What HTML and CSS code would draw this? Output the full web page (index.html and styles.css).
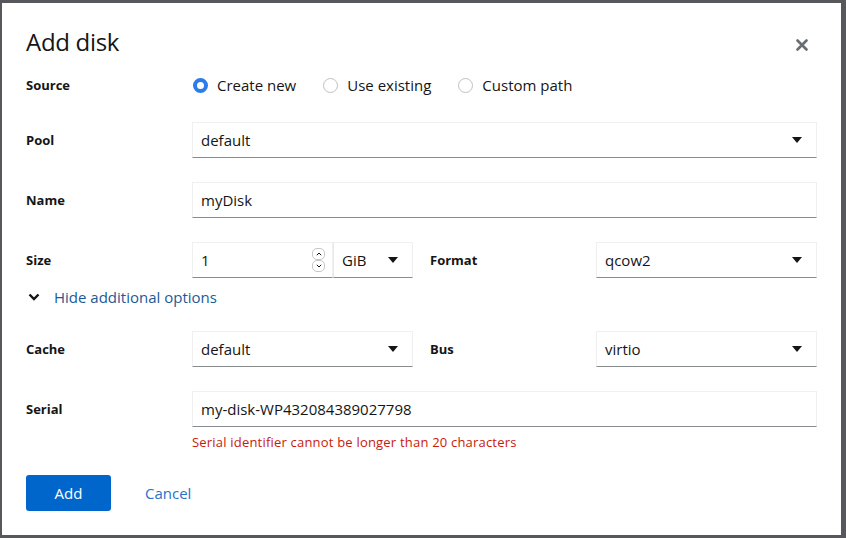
FILE: index.html
```html
<!DOCTYPE html>
<html lang="en">
<head>
<meta charset="utf-8">
<title>Add disk</title>
<link rel="stylesheet" href="styles.css">
</head>
<body>
<div class="backdrop">
  <div class="modal">
    <header class="modal-head">
      <h1 class="title">Add disk</h1>
      <button class="close" aria-label="Close">
        <svg width="12" height="12" viewBox="0 0 12 12"><path d="M1.5 1.5 L10.5 10.5 M10.5 1.5 L1.5 10.5" stroke="#6a6e73" stroke-width="2.6" stroke-linecap="round"/></svg>
      </button>
    </header>

    <div class="form">
      <div class="row row-source">
        <div class="label">Source</div>
        <div class="radios">
          <label class="radio"><span class="dot on"></span>Create new</label>
          <label class="radio"><span class="dot"></span>Use existing</label>
          <label class="radio"><span class="dot"></span>Custom path</label>
        </div>
      </div>

      <div class="row">
        <div class="label">Pool</div>
        <div class="control span3 select"><span>default</span><span class="caret"></span></div>
      </div>

      <div class="row">
        <div class="label">Name</div>
        <div class="control span3"><span>myDisk</span></div>
      </div>

      <div class="row">
        <div class="label">Size</div>
        <div class="size-group">
          <div class="control num"><span>1</span>
            <span class="spin">
              <span class="spin-btn"><svg width="6" height="4" viewBox="0 0 6 4"><path d="M0.8 3.2 L3 1 L5.2 3.2" fill="none" stroke="#151515" stroke-width="1"/></svg></span>
              <span class="spin-btn"><svg width="6" height="4" viewBox="0 0 6 4"><path d="M0.8 0.8 L3 3 L5.2 0.8" fill="none" stroke="#151515" stroke-width="1"/></svg></span>
            </span>
          </div>
          <div class="control unit select"><span>GiB</span><span class="caret"></span></div>
        </div>
        <div class="label label2">Format</div>
        <div class="control select"><span>qcow2</span><span class="caret"></span></div>
      </div>

      <div class="toggle-row">
        <svg class="chev" width="12" height="8" viewBox="0 0 12 8"><path d="M1.5 1.5 L6 6 L10.5 1.5" fill="none" stroke="#151515" stroke-width="2.4"/></svg>
        <span class="toggle-text">Hide additional options</span>
      </div>

      <div class="row row-cache">
        <div class="label">Cache</div>
        <div class="control select"><span>default</span><span class="caret"></span></div>
        <div class="label label2">Bus</div>
        <div class="control select"><span>virtio</span><span class="caret"></span></div>
      </div>

      <div class="row">
        <div class="label">Serial</div>
        <div class="control span3"><span>my-disk-WP432084389027798</span></div>
      </div>
      <div class="row row-error">
        <div></div>
        <div class="error span3">Serial identifier cannot be longer than 20 characters</div>
      </div>
    </div>

    <footer class="actions">
      <button class="btn-primary">Add</button>
      <button class="btn-link">Cancel</button>
    </footer>
  </div>
</div>
</body>
</html>
```

FILE: styles.css
```css
* { box-sizing: border-box; }
html, body { margin: 0; padding: 0; }
body {
  width: 846px;
  height: 538px;
  overflow: hidden;
  background: #56585b;
  font-family: "Open Sans", "Liberation Sans", sans-serif;
  color: #151515;
}
.backdrop {
  padding: 3px 5px 3px 2px;
}
.modal {
  width: 839px;
  height: 532px;
  background: #fff;
  padding: 24px 24px 24px 24px;
  display: flex;
  flex-direction: column;
}
.modal-head {
  display: flex;
  justify-content: space-between;
  align-items: center;
  height: 30px;
}
.title {
  margin: 0;
  font-size: 24px;
  font-weight: 400;
  line-height: 30px;
  letter-spacing: -0.3px;
}
.close {
  background: none;
  border: 0;
  padding: 0;
  margin-right: 9px;
  margin-top: 6px;
  width: 12px;
  height: 12px;
  display: flex;
}
.form {
  display: flex;
  flex-direction: column;
  margin-top: 18px;
}
.row {
  display: grid;
  grid-template-columns: 166px 221px 183px 221px;
  align-items: center;
  margin-bottom: 24px;
}
.row-source { height: 20px; margin-bottom: 27px; }
.label {
  font-size: 13px;
  font-weight: 700;
  line-height: 20px;
}
.label2 { padding-left: 17px; }
.span3 { grid-column: 2 / 5; }
.radios {
  grid-column: 2 / 5;
  display: flex;
  align-items: center;
}
.radio {
  display: flex;
  align-items: center;
  font-size: 15px;
  line-height: 20px;
  margin-right: 26px;
}
.dot {
  width: 15px;
  height: 15px;
  border-radius: 50%;
  border: 1px solid #c2c0bc;
  margin-left: 1px;
  margin-right: 9px;
  background: #fff;
}
.dot.on {
  border: 4px solid #2b7de9;
  background: #fff;
}
.control {
  height: 36px;
  border: 1px solid #f0f0f0;
  border-bottom-color: #8a8d90;
  display: flex;
  align-items: center;
  justify-content: space-between;
  padding: 0 14px 0 8px;
  font-size: 15px;
}
.caret {
  width: 0;
  height: 0;
  border-left: 5.5px solid transparent;
  border-right: 5.5px solid transparent;
  border-top: 6px solid #151515;
}
.size-group {
  display: flex;
}
.num {
  width: 141px;
  padding-right: 7px;
}
.unit {
  width: 80px;
  border-left-color: #e8e8e8;
  padding-right: 14px;
}
.spin {
  display: flex;
  flex-direction: column;
}
.spin-btn {
  width: 13px;
  height: 12px;
  border: 1px solid #c7c7c7;
  border-radius: 5px;
  display: flex;
  align-items: center;
  justify-content: center;
  background: #fff;
}
.toggle-row {
  display: flex;
  align-items: center;
  height: 20px;
  margin-top: -15px;
  margin-bottom: 24px;
  padding-left: 2px;
}
.chev { margin-right: 14px; }
.toggle-text {
  color: #1b5a96;
  font-size: 15px;
}
.row-error { margin-top: -18px; margin-bottom: 0; }
.error {
  color: #c9190b;
  font-size: 13px;
  line-height: 18px;
  letter-spacing: 0.2px;
}
.actions {
  margin-top: auto;
  display: flex;
  align-items: center;
}
.btn-primary {
  width: 85px;
  height: 36px;
  background: #0066cc;
  color: #fff;
  border: 0;
  border-radius: 3px;
  font-family: inherit;
  font-size: 15px;
}
.btn-link {
  background: none;
  border: 0;
  color: #2a72c8;
  font-family: inherit;
  font-size: 15px;
  margin-left: 26px;
  padding: 0 8px;
}
```
